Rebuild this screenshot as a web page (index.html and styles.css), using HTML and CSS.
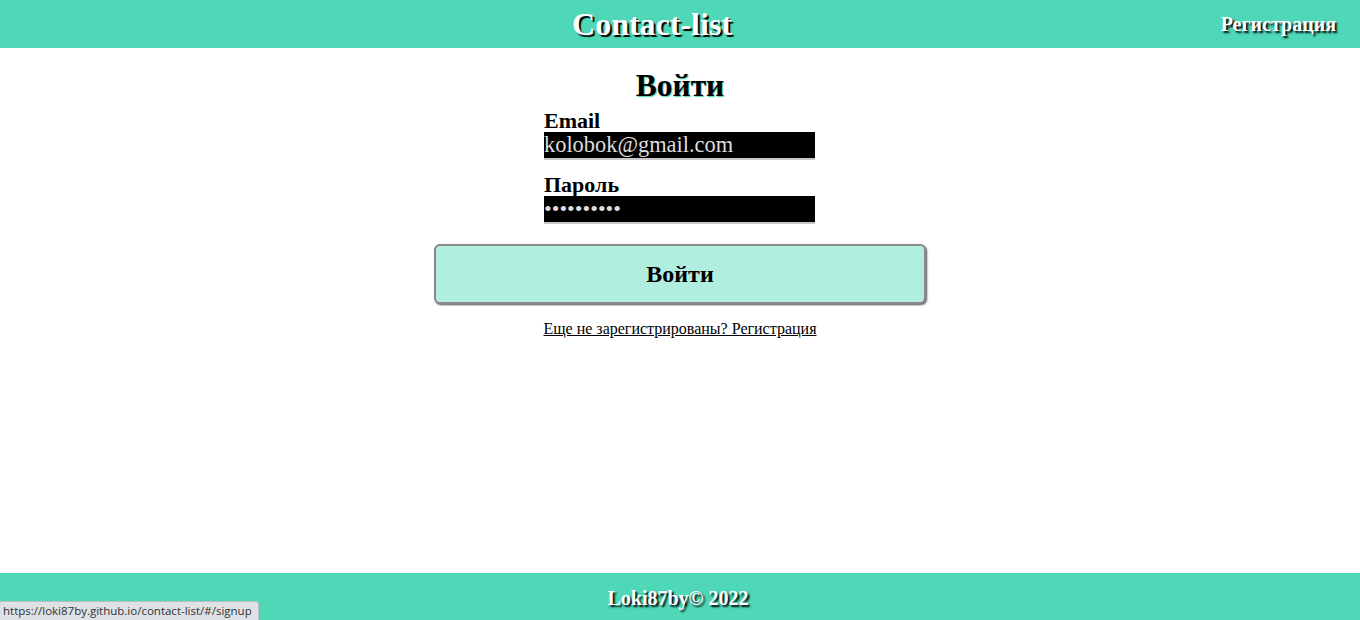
FILE: index.html
```html
<!DOCTYPE html>
<html lang="ru">
<head>
<meta charset="utf-8">
<title>Contact-list</title>
<link rel="stylesheet" href="styles.css">
</head>
<body>
<div class="app">
  <header class="header">
    <div class="header-side"></div>
    <h1 class="logo">Contact-list</h1>
    <div class="header-side header-right"><a class="nav-link" href="#/signup">Регистрация</a></div>
  </header>
  <main class="main">
    <h2 class="title">Войти</h2>
    <form class="form">
      <label class="field">
        <span class="label">Email</span>
        <input class="input" type="email" value="kolobok@gmail.com">
      </label>
      <label class="field">
        <span class="label">Пароль</span>
        <input class="input input-pass" type="password" value="1234567890">
      </label>
    </form>
    <button class="btn" type="button">Войти</button>
    <a class="signup-link" href="#/signup">Еще не зарегистрированы? Регистрация</a>
  </main>
  <footer class="footer">
    <span class="copy">Loki87by© 2022</span>
  </footer>
  <div class="status">https://loki87by.github.io/contact-list/#/signup</div>
</div>
</body>
</html>
```
FILE: styles.css
```css
* { box-sizing: border-box; }
html, body { margin: 0; padding: 0; }
body {
  font-family: "Liberation Serif", "Times New Roman", serif;
  color: #000;
  background: #fff;
}
.app {
  height: 620px;
  display: flex;
  flex-direction: column;
  position: relative;
  overflow: hidden;
}
.header {
  height: 48px;
  background: #4ed8b7;
  display: grid;
  grid-template-columns: 1fr auto 1fr;
  align-items: center;
}
.logo {
  margin: 0;
  font-size: 32px;
  font-weight: bold;
  color: #fff;
  text-shadow: 2px 2px 1px #000;
  line-height: 48px;
  padding-right: 56px;
  grid-column: 2;
}
.header-right {
  display: flex;
  justify-content: flex-end;
  padding-right: 24px;
}
.nav-link {
  color: #fff;
  text-decoration: none;
  font-weight: bold;
  font-size: 20px;
  text-shadow: 2px 2px 2px #000;
}
.main {
  flex: 1;
  display: flex;
  flex-direction: column;
  align-items: center;
}
.title {
  margin: 21px 0 0;
  font-size: 31.5px;
  line-height: 34px;
  font-weight: bold;
  text-shadow: 1px 1px 1px #4ed8b7;
}
.form {
  display: flex;
  flex-direction: column;
  gap: 14px;
  width: 272px;
  margin-top: 7px;
}
.field {
  display: flex;
  flex-direction: column;
}
.label {
  font-size: 22px;
  font-weight: bold;
  line-height: 22px;
}
.input {
  width: 271px;
  height: 28px;
  margin: 0;
  padding: 0;
  border: none;
  border-bottom: 2px solid #c8c8c8;
  background: #000;
  color: #ddd;
  font-family: "Liberation Serif", "Times New Roman", serif;
  font-size: 22.4px;
  line-height: 26px;
  outline: none;
}
.input-pass {
  font-size: 22px;
}
.btn {
  margin-top: 20px;
  width: 492px;
  height: 60px;
  background: #b2eee0;
  border: 2px solid #8a8a8a;
  border-radius: 6px;
  box-shadow: 1px 1px 2px #555;
  font-family: "Liberation Serif", "Times New Roman", serif;
  font-size: 24px;
  font-weight: bold;
  color: #000;
  cursor: pointer;
}
.signup-link {
  margin-top: 16px;
  font-size: 16px;
  color: #000;
  text-decoration: underline;
}
.footer {
  height: 47px;
  background: #4ed8b7;
  display: flex;
  align-items: center;
  justify-content: center;
}
.copy {
  color: #fff;
  font-weight: bold;
  font-size: 20px;
  text-shadow: 2px 2px 2px #000;
  margin-top: 4px;
  margin-left: -4px;
}
.status {
  position: absolute;
  left: 0;
  bottom: 0;
  height: 19px;
  padding: 0 6px 0 3px;
  background: #dee1e6;
  border: 1px solid #b9bcc1;
  border-left: none;
  border-bottom: none;
  border-top-right-radius: 3px;
  font-family: "Open Sans", "DejaVu Sans", sans-serif;
  font-size: 11.5px;
  line-height: 18px;
  color: #333;
}
```
